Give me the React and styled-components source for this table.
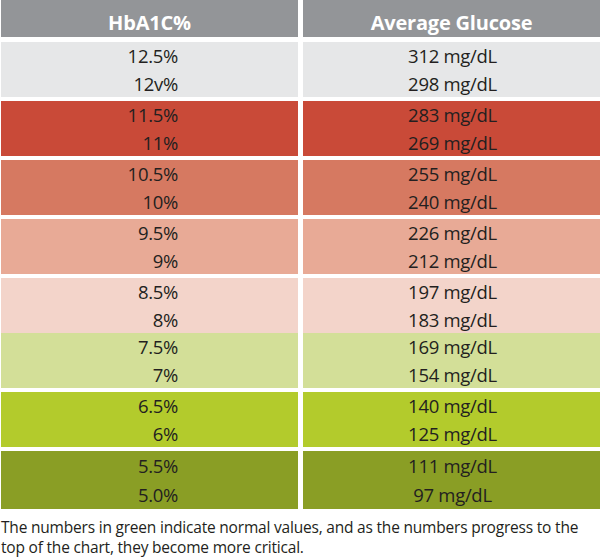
import React from "react";
import styled, { createGlobalStyle } from "styled-components";

const GlobalStyle = createGlobalStyle`
  html, body {
    margin: 0;
    padding: 0;
    background: #ffffff;
  }
  body {
    font-family: "Open Sans", "Noto Sans", sans-serif;
    color: #231f20;
  }
`;

const bands = [
  { bg: "#e6e7e8", rows: [["12.5%", "312 mg/dL"], ["12v%", "298 mg/dL"]] },
  { bg: "#c94a38", rows: [["11.5%", "283 mg/dL"], ["11%", "269 mg/dL"]] },
  { bg: "#d67961", rows: [["10.5%", "255 mg/dL"], ["10%", "240 mg/dL"]] },
  { bg: "#e8aa96", rows: [["9.5%", "226 mg/dL"], ["9%", "212 mg/dL"]] },
  { bg: "#f3d4ca", rows: [["8.5%", "197 mg/dL"], ["8%", "183 mg/dL"]] },
  { bg: "#d3df98", flush: true, rows: [["7.5%", "169 mg/dL"], ["7%", "154 mg/dL"]] },
  { bg: "#b3cb2c", rows: [["6.5%", "140 mg/dL"], ["6%", "125 mg/dL"]] },
  { bg: "#8a9e25", tall: true, rows: [["5.5%", "111 mg/dL"], ["5.0%", "97 mg/dL"]] },
];

const App = () => {
  return (
    <Page>
      <GlobalStyle />
      <Chart>
        <HeadRow>
          <HeadCell>HbA1C%</HeadCell>
          <HeadCell>Average Glucose</HeadCell>
        </HeadRow>
        {bands.map((band, i) => (
          <Band key={i} $flush={band.flush}>
            <Cell $bg={band.bg} $left>
              {band.rows.map((r) => (
                <Line key={r[0]} $tall={band.tall}>{r[0]}</Line>
              ))}
            </Cell>
            <Cell $bg={band.bg}>
              {band.rows.map((r) => (
                <Line key={r[1]} $tall={band.tall}>{r[1]}</Line>
              ))}
            </Cell>
          </Band>
        ))}
      </Chart>
      <Note>
        The numbers in green indicate normal values, and as the numbers progress to the
        <br />
        top of the chart, they become more critical.
      </Note>
    </Page>
  );
};

export default App;

const Page = styled.div`
  width: 600px;
  height: 558px;
  overflow: hidden;
`;

const Chart = styled.div`
  display: flex;
  flex-direction: column;
  padding-left: 1px;
`;

const HeadRow = styled.div`
  display: grid;
  grid-template-columns: 297px 297px;
  column-gap: 5px;
  margin-bottom: 5px;
`;

const HeadCell = styled.div`
  background: #939598;
  color: #ffffff;
  height: 37px;
  box-sizing: border-box;
  padding-top: 9px;
  line-height: 28px;
  font-size: 20px;
  font-weight: 700;
  text-align: center;
  letter-spacing: -0.2px;
`;

const Band = styled.div`
  display: grid;
  grid-template-columns: 297px 297px;
  column-gap: 5px;
  margin-top: ${(props) => (props.$flush ? "0" : "4px")};
  &:nth-child(2) {
    margin-top: 0;
  }
`;

const Cell = styled.div`
  background: ${(props) => props.$bg};
  display: flex;
  flex-direction: column;
  align-items: ${(props) => (props.$left ? "flex-end" : "center")};
  padding-right: ${(props) => (props.$left ? "120px" : "0")};
  padding-left: ${(props) => (props.$left ? "0" : "2px")};
`;

const Line = styled.div`
  height: ${(props) => (props.$tall ? "29px" : "27.5px")};
  line-height: ${(props) => (props.$tall ? "29px" : "27.5px")};
  font-size: 18.5px;
  letter-spacing: -0.3px;
  white-space: nowrap;
`;

const Note = styled.p`
  margin: 8px 0 0;
  padding-left: 1px;
  font-size: 15.5px;
  line-height: 20px;
  letter-spacing: -0.2px;
  white-space: nowrap;
`;
